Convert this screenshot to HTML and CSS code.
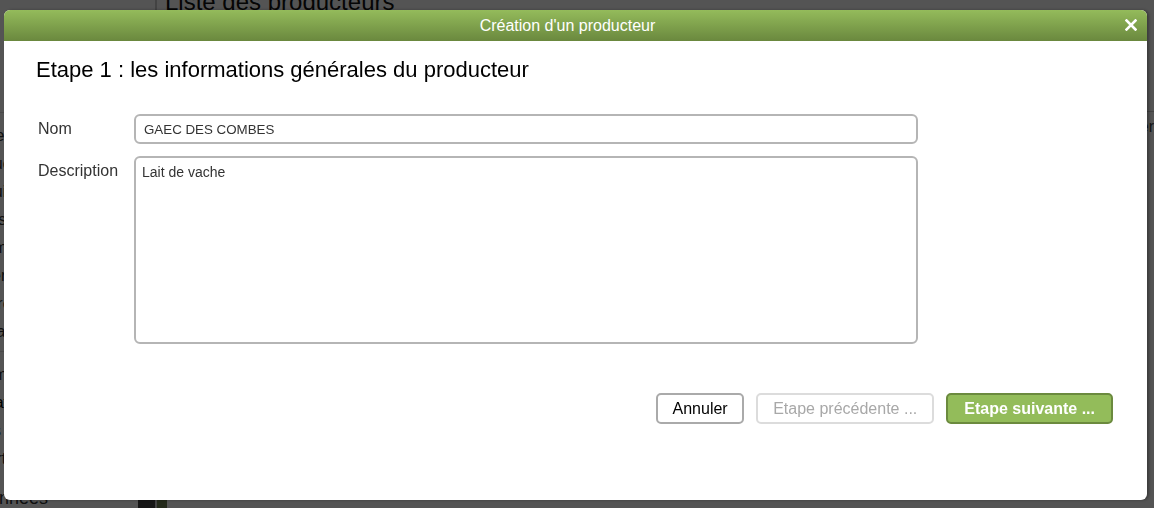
FILE: index.html
```html
<!DOCTYPE html>
<html lang="fr">
<head>
    <meta charset="UTF-8">
    <meta name="viewport" content="width=device-width, initial-scale=1.0">
    <title>Création d'un producteur</title>
    <link rel="stylesheet" href="styles.css">
</head>
<body>
    <div class="page">
        <div class="sidebar">
            <div class="side-sep"></div>
            <div class="side-item">Accueil</div>
            <div class="side-item">Producteurs</div>
            <div class="side-item">Produits</div>
            <div class="side-item">Livraisons</div>
            <div class="side-item">Commandes</div>
            <div class="side-item">Paniers</div>
            <div class="side-item">Adhérents</div>
            <div class="side-item">Cotisations</div>
            <div class="side-sep"></div>
            <div class="side-item">Paramètres</div>
            <div class="side-item strong">Utilisateurs</div>
            <div class="side-item">Rôles</div>
            <div class="side-item">Exports</div>
            <div class="side-item last">Données</div>
        </div>
        <div class="main">
            <h1>Liste des producteurs</h1>
            <div class="main-sep"></div>
            <div class="main-row">Chercher</div>
            <div class="main-foot"><span class="foot-dark"></span><span class="foot-green"></span></div>
        </div>
    </div>

    <div class="overlay"></div>

    <div class="dialog">
        <div class="dialog-header">
            <span class="dialog-title">Création d'un producteur</span>
            <button class="dialog-close" type="button">
                <svg width="12" height="12" viewBox="0 0 12 12">
                    <path d="M1.5 1.5 L10.5 10.5 M10.5 1.5 L1.5 10.5" stroke="#fff" stroke-width="2.6" stroke-linecap="square"/>
                </svg>
            </button>
        </div>
        <div class="dialog-body">
            <h2>Etape 1 : les informations générales du producteur</h2>
            <form class="step-form">
                <div class="form-row">
                    <label for="nom">Nom</label>
                    <input type="text" id="nom" value="GAEC DES COMBES">
                </div>
                <div class="form-row">
                    <label for="description">Description</label>
                    <textarea id="description">Lait de vache</textarea>
                </div>
            </form>
            <div class="actions">
                <button type="button" class="btn">Annuler</button>
                <button type="button" class="btn disabled">Etape précédente ...</button>
                <button type="button" class="btn primary">Etape suivante ...</button>
            </div>
        </div>
    </div>
</body>
</html>
```

FILE: styles.css
```css
body {
    margin: 0;
    font-family: "Liberation Sans", Arial, sans-serif;
    background: #fff;
    overflow: hidden;
}
.page {
    display: flex;
    height: 508px;
}
.sidebar {
    width: 155px;
    border-right: 2px solid #ccc;
    padding-top: 112px;
    overflow: hidden;
}
.side-sep {
    border-top: 1px solid #ddd;
    margin: 0 0 14px;
}
.side-item {
    margin-left: -40px;
    height: 28px;
    font-size: 16px;
    color: #333;
    white-space: nowrap;
}
.side-item.strong {
    color: #000;
}
.side-item.last {
    margin-left: -24px;
    margin-top: 10px;
    font-size: 18px;
}
.main {
    flex: 1;
    display: flex;
    flex-direction: column;
    padding-left: 8px;
}
h1 {
    font-size: 24px;
    font-weight: normal;
    color: #111;
    margin: -12px 0 0;
}
.main-sep {
    border-top: 1px solid #ccc;
    margin-top: 95px;
}
.main-row {
    margin-top: 6px;
    text-align: right;
    font-size: 16px;
    color: #444;
}
.main-foot {
    margin-top: auto;
    display: flex;
    height: 8px;
    margin-left: -27px;
}
.foot-dark {
    width: 17px;
    background: #444;
}
.foot-green {
    width: 10px;
    margin-left: 2px;
    background: #6b7d4f;
}
.overlay {
    position: fixed;
    inset: 0;
    background: rgba(0, 0, 0, 0.67);
}
.dialog {
    position: absolute;
    left: 4px;
    top: 10px;
    width: 1143px;
    height: 490px;
    background: #fff;
    border-radius: 6px;
    box-shadow: 2px 0 3px rgba(0, 0, 0, 0.3);
    display: flex;
    flex-direction: column;
}
.dialog-header {
    position: relative;
    height: 31px;
    display: flex;
    align-items: center;
    padding-right: 16px;
    border-radius: 6px 6px 0 0;
    background: linear-gradient(#94bb5b, #6a883e);
}
.dialog-title {
    flex: 1;
    text-align: center;
    color: #fff;
    font-size: 16px;
}
.dialog-close {
    position: absolute;
    right: 10px;
    top: 9px;
    width: 12px;
    height: 12px;
    padding: 0;
    border: none;
    background: none;
    display: flex;
}
.dialog-body {
    padding: 16px 34px 0 32px;
}
h2 {
    font-size: 22px;
    font-weight: normal;
    line-height: 26px;
    color: #000;
    margin: 0 0 31px;
}
.step-form {
    display: flex;
    flex-direction: column;
    gap: 12px;
}
.form-row {
    display: flex;
    align-items: flex-start;
}
.form-row label {
    width: 96px;
    padding-left: 2px;
    font-size: 16px;
    color: #333;
    line-height: 18px;
    padding-top: 6px;
}
.form-row input,
.form-row textarea {
    width: 784px;
    box-sizing: border-box;
    border: 2px solid #b5b5b5;
    border-radius: 6px;
    font-family: "Liberation Sans", Arial, sans-serif;
    color: #333;
    margin: 0;
    outline: none;
}
.form-row input {
    height: 30px;
    padding: 0 8px;
    font-size: 13.33px;
}
.form-row textarea {
    height: 188px;
    padding: 6px 6px;
    font-size: 14px;
    resize: none;
}
.actions {
    display: flex;
    justify-content: flex-end;
    gap: 12px;
    margin-top: 49px;
}
.btn {
    height: 31px;
    padding: 0 14.5px;
    border: 2px solid #aaa;
    border-radius: 5px;
    background: #fff;
    color: #000;
    font-family: "Liberation Sans", Arial, sans-serif;
    font-size: 16px;
}
.btn.disabled {
    border-color: #dcdcdc;
    color: #a8a8a8;
    padding: 0 15px;
}
.btn.primary {
    background: #93bc5a;
    border-color: #6b8a3e;
    color: #fff;
    font-weight: bold;
    padding: 0 16px;
}
```
